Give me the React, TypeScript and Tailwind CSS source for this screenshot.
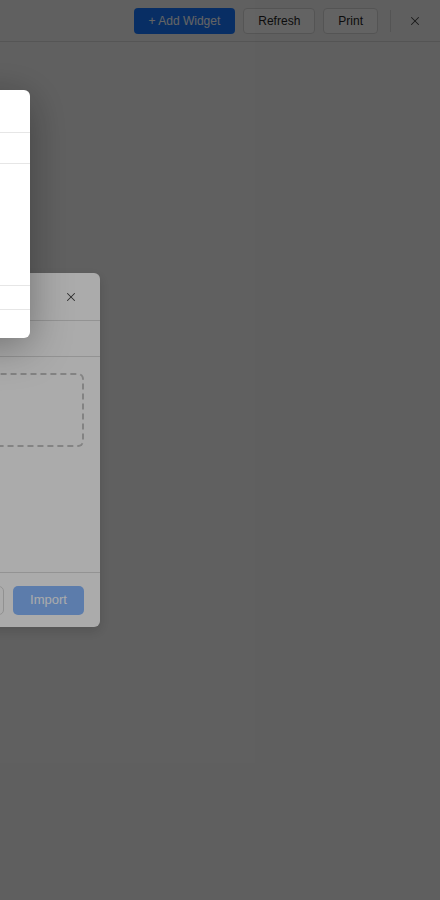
import { X } from "lucide-react";

const Toolbar = () => {
  return (
    <header className="h-[42px] border-b border-[#d9d9d9] bg-[#f5f5f5] flex items-center justify-end pr-[13px]">
      <div className="flex items-center gap-2">
        <button className="h-[26px] px-[15px] rounded-[4px] bg-[#1677ff] text-white text-[12px] leading-none">
          + Add Widget
        </button>
        <button className="h-[26px] px-[14px] rounded-[4px] border border-[#d9d9d9] bg-white text-[#1f1f1f] text-[12px] leading-none">
          Refresh
        </button>
        <button className="h-[26px] px-[14px] rounded-[4px] border border-[#d9d9d9] bg-white text-[#1f1f1f] text-[12px] leading-none">
          Print
        </button>
      </div>
      <div className="w-px h-[22px] bg-[#d9d9d9] ml-[12px] mr-[12px]" />
      <button className="w-6 h-6 flex items-center justify-center text-[#444]">
        <X size={14} strokeWidth={1.75} />
      </button>
    </header>
  );
};

const ImportDialog = () => {
  return (
    <div className="fixed top-[273px] left-[-380px] w-[480px] bg-white rounded-[6px] shadow-[0_4px_12px_rgba(0,0,0,0.15)] flex flex-col">
      <div className="h-[48px] border-b border-[#dcdcdc] flex items-center justify-between pl-4 pr-[18px]">
        <span className="text-[15px] font-semibold text-[#1f1f1f]">Import Dashboard</span>
        <button className="w-[22px] h-[22px] flex items-center justify-center text-[#444]">
          <X size={14} strokeWidth={1.75} />
        </button>
      </div>
      <div className="h-[36px] border-b border-[#dcdcdc]" />
      <div className="h-[215px] px-4 pt-4">
        <div className="h-[74px] rounded-[6px] border-2 border-dashed border-[#c4c4c4]" />
      </div>
      <div className="h-[55px] border-t border-[#dcdcdc] flex items-center justify-end gap-[9px] pr-4">
        <button className="h-[29px] px-4 rounded-[5px] border border-[#d9d9d9] bg-white text-[13px] text-[#1f1f1f]">
          Cancel
        </button>
        <button className="h-[29px] w-[71px] rounded-[5px] bg-[#1677ff] opacity-50 text-white text-[13px]">
          Import
        </button>
      </div>
    </div>
  );
};

const SidePanel = () => {
  return (
    <div className="fixed top-[90px] left-[-290px] w-[320px] h-[248px] bg-white rounded-[6px] shadow-[0_8px_40px_rgba(0,0,0,0.35)] flex flex-col">
      <div className="h-[43px] border-b border-[#e6e6e6]" />
      <div className="h-[31px] border-b border-[#e6e6e6]" />
      <div className="h-[122px] border-b border-[#e6e6e6]" />
      <div className="h-[24px] border-b border-[#e6e6e6]" />
      <div className="flex-1" />
    </div>
  );
};

export default function App() {
  return (
    <div className="min-h-screen bg-[#f5f5f5] font-['Liberation_Sans',Arial,sans-serif]">
      <Toolbar />
      <div className="fixed inset-0 bg-black/[0.42]" />
      <ImportDialog />
      <div className="fixed inset-0 bg-black/[0.33]" />
      <SidePanel />
    </div>
  );
}
